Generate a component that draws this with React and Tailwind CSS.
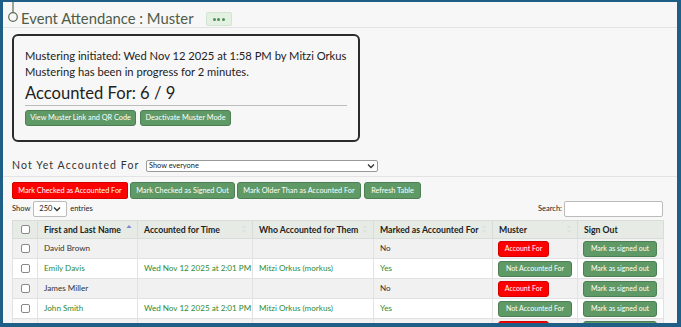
import React from 'react';

const rows = [
  { name: 'David Brown', time: '', who: '', marked: 'No', ok: false },
  { name: 'Emily Davis', time: 'Wed Nov 12 2025 at 2:01 PM', who: 'Mitzi Orkus (morkus)', marked: 'Yes', ok: true },
  { name: 'James Miller', time: '', who: '', marked: 'No', ok: false },
  { name: 'John Smith', time: 'Wed Nov 12 2025 at 2:01 PM', who: 'Mitzi Orkus (morkus)', marked: 'Yes', ok: true },
  { name: 'Michael Wilson', time: 'Wed Nov 12 2025 at 2:01 PM', who: 'Mitzi Orkus (morkus)', marked: 'No', ok: false },
];

function Chevron() {
  return (
    <svg width="8" height="6" viewBox="0 0 8 6" className="shrink-0">
      <path d="M1 1.5 L4 4.5 L7 1.5" fill="none" stroke="#333" strokeWidth="1.3" />
    </svg>
  );
}

function SortArrows({ active }) {
  return (
    <svg width="6" height="10" viewBox="0 0 6 10" className="shrink-0">
      <path d="M0.5 4 L3 1 L5.5 4 Z" fill={active ? '#7b84d8' : '#dfe3df'} />
      {!active && <path d="M0.5 6 L3 9 L5.5 6 Z" fill="#dfe3df" />}
    </svg>
  );
}

function Box() {
  return <div className="w-[9px] h-[9px] rounded-[2px] border border-[#888] bg-white" />;
}

function GreenBtn({ children, className = '' }) {
  return (
    <button className={`bg-[#5e9966] text-white border border-[#4c7f53] rounded-[3px] leading-none whitespace-nowrap ${className}`}>
      {children}
    </button>
  );
}

export default function App() {
  return (
    <div className="w-[681px] h-[327px] overflow-hidden bg-[#f7f7f7] border-[#1e5e87] border-l-[3px] border-r-[4px] border-t-[2px] border-b-[4px] font-['Lato',sans-serif] text-[#222]">
      {/* title */}
      <div className="h-[26px] flex items-start border-b border-[#e3e3e3] pl-[3px]">
        <svg width="14" height="24" viewBox="0 0 14 24" className="shrink-0">
          <line x1="7" y1="0" x2="7" y2="10.5" stroke="#5b6b55" strokeWidth="1.2" />
          <circle cx="7" cy="15" r="4.3" fill="none" stroke="#5b6b55" strokeWidth="1.2" />
        </svg>
        <div className="mt-[5px] ml-[1px] text-[14.8px] leading-[22px] text-[#4e5c48] whitespace-nowrap">
          Event Attendance : Muster
        </div>
        <div className="mt-[10px] ml-[12px] w-[26px] h-[14px] rounded-[2px] bg-[#e3f1e3] border border-[#d2e4d2] flex items-center justify-center gap-[1.5px]">
          <span className="w-[3px] h-[3px] rounded-full bg-[#4f8d55]" />
          <span className="w-[3px] h-[3px] rounded-full bg-[#4f8d55]" />
          <span className="w-[3px] h-[3px] rounded-full bg-[#4f8d55]" />
        </div>
      </div>

      <div className="pl-[9px] pr-[14px]">
        {/* muster box */}
        <div className="mt-[6px] w-[348px] h-[108px] border-2 border-[#2b2b2b] rounded-[6px] px-[11px] pt-[11px] whitespace-nowrap">
          <div className="text-[11.2px] leading-[17px]">Mustering initiated: Wed Nov 12 2025 at 1:58 PM by Mitzi Orkus</div>
          <div className="text-[11.2px] leading-[16px]">Mustering has been in progress for 2 minutes.</div>
          <div className="text-[16.6px] leading-[22px] mt-[2px]">Accounted For: 6 / 9</div>
          <div className="border-t border-[#bdbdbd] mt-[1px] mb-[4px]" />
          <div className="flex gap-[4px]">
            <GreenBtn className="w-[111px] h-[16px] text-[7.3px]">View Muster Link and QR Code</GreenBtn>
            <GreenBtn className="w-[91px] h-[16px] text-[7.3px]">Deactivate Muster Mode</GreenBtn>
          </div>
        </div>

        {/* not yet accounted */}
        <div className="mt-[16px] flex items-center h-[16px]">
          <div className="text-[10.5px] tracking-[1.1px] text-[#333] w-[134px] whitespace-nowrap">Not Yet Accounted For</div>
          <div className="w-[232px] h-[12px] bg-white border border-[#999] rounded-[2px] flex items-center justify-between px-[2px]">
            <span className="text-[7.4px] leading-none">Show everyone</span>
            <Chevron />
          </div>
        </div>
      </div>
      <div className="border-t border-[#e3e3e3] mt-[2px]" />

      <div className="pl-[9px] pr-[14px]">
        <div className="mt-[5px] flex h-[17px]">
          <button className="w-[116px] bg-[#ff0000] text-white border border-[#d40000] rounded-[2px] text-[7.3px] leading-none whitespace-nowrap">Mark Checked as Accounted For</button>
          <GreenBtn className="ml-[2px] w-[105px] text-[7.3px]">Mark Checked as Signed Out</GreenBtn>
          <GreenBtn className="ml-[2px] w-[124px] text-[7.3px]">Mark Older Than as Accounted For</GreenBtn>
          <GreenBtn className="ml-[3px] w-[57px] text-[7.3px]">Refresh Table</GreenBtn>
        </div>

        <div className="mt-[2px] flex items-center h-[16px] text-[7.5px]">
          <span>Show</span>
          <div className="ml-[3px] w-[34px] h-[16px] bg-white border border-[#bbb] rounded-[2px] flex items-center justify-between px-[5px]">
            <span>250</span>
            <Chevron />
          </div>
          <span className="ml-[3px]">entries</span>
          <span className="ml-auto mr-[2px]">Search:</span>
          <div className="w-[99px] h-[16px] bg-white border border-[#bbb] rounded-[2px]" />
        </div>

        {/* table */}
        <table className="mt-[3px] w-[651px] table-fixed border-collapse text-[8.1px]">
          <colgroup>
            <col className="w-[25px]" />
            <col className="w-[100px]" />
            <col className="w-[115px]" />
            <col className="w-[121px]" />
            <col className="w-[119px]" />
            <col className="w-[85px]" />
            <col className="w-[86px]" />
          </colgroup>
          <thead>
            <tr className="h-[18px] bg-[#e6ebe6] text-[#222]">
              <th className="border border-[#d9ddd9] px-[5px]"><div className="flex justify-center"><Box /></div></th>
              {[
                ['First and Last Name', 'active'],
                ['Accounted for Time', 'idle'],
                ['Who Accounted for Them', 'idle'],
                ['Marked as Accounted For', 'idle'],
                ['Muster', 'idle'],
                ['Sign Out', 'none'],
              ].map(([label, s]) => (
                <th key={label} className="border border-[#d9ddd9] pl-[6px] pr-[5px] text-left font-bold text-[8.7px]">
                  <div className="flex items-center justify-between">
                    <span className="whitespace-nowrap">{label}</span>
                    {s !== 'none' && <SortArrows active={s === 'active'} />}
                  </div>
                </th>
              ))}
            </tr>
          </thead>
          <tbody>
            {rows.map((r, i) => (
              <tr key={r.name} className={`h-[20px] ${i % 2 === 0 ? 'bg-[#f1f1f1]' : 'bg-white'} ${r.ok ? 'text-[#2f8a2f]' : 'text-[#333]'}`}>
                <td className="border border-[#e2e2e2] px-[5px]"><div className="flex justify-center"><Box /></div></td>
                <td className="border border-[#e2e2e2] px-[6px] whitespace-nowrap">{r.name}</td>
                <td className="border border-[#e2e2e2] px-[6px] whitespace-nowrap">{r.time}</td>
                <td className="border border-[#e2e2e2] px-[6px] whitespace-nowrap">{r.who}</td>
                <td className="border border-[#e2e2e2] px-[6px]">{r.marked}</td>
                <td className="border border-[#e2e2e2] px-[5px]">
                  {r.ok ? (
                    <GreenBtn className="w-[74px] h-[16px] text-[7px] block">Not Accounted For</GreenBtn>
                  ) : (
                    <button className="block w-[51px] h-[16px] bg-[#ff0000] text-white border border-[#d40000] rounded-[3px] text-[7px] leading-none whitespace-nowrap">Account For</button>
                  )}
                </td>
                <td className="border border-[#e2e2e2] px-[5px]">
                  <GreenBtn className="w-[74px] h-[16px] text-[7px] block">Mark as signed out</GreenBtn>
                </td>
              </tr>
            ))}
          </tbody>
        </table>
      </div>
    </div>
  );
}
